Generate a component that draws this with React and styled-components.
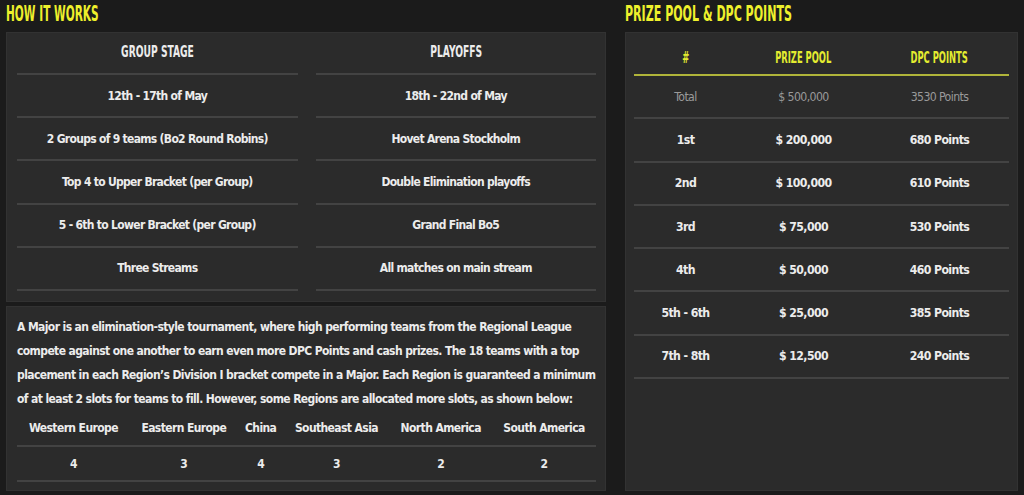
import React from "react";
import styled, { createGlobalStyle } from "styled-components";

const Global = createGlobalStyle`
  html, body { margin: 0; padding: 0; background: #1b1b1b; }
  body { font-family: "DejaVu Sans Condensed", "Liberation Sans", sans-serif; color: #ececec; }
`;

const Page = styled.div`
  width: 1024px;
  height: 495px;
  box-sizing: border-box;
  padding: 0 6px 4px 6px;
  display: grid;
  grid-template-columns: 600px 393px;
  column-gap: 19px;
  background: #1b1b1b;
  overflow: hidden;
`;

const Column = styled.section`
  display: flex;
  flex-direction: column;
  min-height: 0;
`;

const Heading = styled.h2`
  flex: none;
  margin: 0;
  height: 32px;
  line-height: 28px;
  font-family: "DejaVu Sans Condensed", sans-serif;
  font-weight: 700;
  font-size: 21px;
  color: #eef02c;
  text-transform: uppercase;
  white-space: nowrap;
  transform: scaleX(${(p) => p.$sx || 0.57});
  transform-origin: left center;
`;

const Card = styled.div`
  background: #2b2b2b;
  border: 1px solid #323232;
  box-sizing: border-box;
  padding: ${(p) => p.$pad || "0 9px 0 10px"};
  flex: ${(p) => (p.$grow ? 1 : "none")};
  height: ${(p) => p.$h || "auto"};
`;

const Stack = styled.div`
  display: flex;
  flex-direction: column;
  gap: 4px;
  flex: 1;
  min-height: 0;
`;

const TwoCols = styled.div`
  display: grid;
  grid-template-columns: 1fr 1fr;
  column-gap: 18px;
`;

const List = styled.div`
  display: flex;
  flex-direction: column;
`;

const Label = styled.span`
  display: inline-block;
  font-family: "DejaVu Sans Condensed", sans-serif;
  font-weight: 700;
  font-size: 15px;
  white-space: nowrap;
  transform: scaleX(${(p) => p.$sx || 0.68});
`;

const HeadCell = styled.div`
  height: 42px;
  box-sizing: border-box;
  padding-top: 9px;
  text-align: center;
  border-bottom: 2px solid #434343;
`;

const Cell = styled.div`
  height: 43.2px;
  box-sizing: border-box;
  display: flex;
  align-items: center;
  justify-content: center;
  font-size: 12px;
  letter-spacing: -0.7px;
  font-weight: 700;
  border-bottom: 2px solid #434343;
  white-space: nowrap;
`;

const Para = styled.p`
  margin: 0;
  padding-top: 8px;
  font-size: 12px;
  letter-spacing: -0.6px;
  font-weight: 700;
  line-height: 24px;
  color: #ececec;
  white-space: nowrap;
`;

const RegionTable = styled.table`
  width: 100%;
  border-collapse: collapse;
  th, td {
    text-align: center;
    font-size: 12px;
    letter-spacing: -0.6px;
    font-weight: 700;
    border-bottom: 2px solid #434343;
    padding: 0 4px;
    white-space: nowrap;
  }
  th { height: 34px; }
  td { height: 33px; }
`;

const PrizeTable = styled.table`
  width: 100%;
  border-collapse: collapse;
  margin-top: 8px;
  th, td { text-align: center; padding: 0; }
  th {
    height: 33px;
    color: #e4ec30;
    border-bottom: 2px solid #b0b43a;
  }
  td {
    height: 41.3px;
    font-size: 12.2px;
    letter-spacing: -0.6px;
    border-bottom: 2px solid #434343;
  }
`;

const Row = styled.tr`
  td {
    color: ${(p) => (p.$muted ? "#9a9a9a" : "#ececec")};
    font-weight: ${(p) => (p.$muted ? 400 : 700)};
  }
`;

const groupStage = [
  "12th - 17th of May",
  "2 Groups of 9 teams (Bo2 Round Robins)",
  "Top 4 to Upper Bracket (per Group)",
  "5 - 6th to Lower Bracket (per Group)",
  "Three Streams",
];
const playoffs = [
  "18th - 22nd of May",
  "Hovet Arena Stockholm",
  "Double Elimination playoffs",
  "Grand Final Bo5",
  "All matches on main stream",
];
const regions = [
  ["Western Europe", 4],
  ["Eastern Europe", 3],
  ["China", 4],
  ["Southeast Asia", 3],
  ["North America", 2],
  ["South America", 2],
];
const prizes = [
  ["Total", "$ 500,000", "3530 Points", true],
  ["1st", "$ 200,000", "680 Points"],
  ["2nd", "$ 100,000", "610 Points"],
  ["3rd", "$ 75,000", "530 Points"],
  ["4th", "$ 50,000", "460 Points"],
  ["5th - 6th", "$ 25,000", "385 Points"],
  ["7th - 8th", "$ 12,500", "240 Points"],
];

export default function App() {
  return (
    <>
      <Global />
      <Page>
        <Column>
          <Heading $sx={0.56}>How it works</Heading>
          <Stack>
            <Card $h="270px">
              <TwoCols>
                <List>
                  <HeadCell>
                    <Label>GROUP STAGE</Label>
                  </HeadCell>
                  {groupStage.map((t) => (
                    <Cell key={t}>{t}</Cell>
                  ))}
                </List>
                <List>
                  <HeadCell>
                    <Label>PLAYOFFS</Label>
                  </HeadCell>
                  {playoffs.map((t) => (
                    <Cell key={t}>{t}</Cell>
                  ))}
                </List>
              </TwoCols>
            </Card>
            <Card $grow>
              <Para>
                A Major is an elimination-style tournament, where high performing teams from the Regional League
                <br />
                compete against one another to earn even more DPC Points and cash prizes. The 18 teams with a top
                <br />
                placement in each Region’s Division I bracket compete in a Major. Each Region is guaranteed a minimum
                <br />
                of at least 2 slots for teams to fill. However, some Regions are allocated more slots, as shown below:
              </Para>
              <RegionTable>
                <thead>
                  <tr>
                    {regions.map(([r]) => (
                      <th key={r}>{r}</th>
                    ))}
                  </tr>
                </thead>
                <tbody>
                  <tr>
                    {regions.map(([r, n]) => (
                      <td key={r}>{n}</td>
                    ))}
                  </tr>
                </tbody>
              </RegionTable>
            </Card>
          </Stack>
        </Column>
        <Column>
          <Heading $sx={0.585}>Prize pool &amp; DPC points</Heading>
          <Card $grow $pad="0 8px 0 8px">
            <PrizeTable>
              <colgroup>
                <col style={{ width: "103px" }} />
                <col style={{ width: "133px" }} />
                <col />
              </colgroup>
              <thead>
                <tr>
                  <th>
                    <Label $sx={0.62}>#</Label>
                  </th>
                  <th>
                    <Label $sx={0.62}>PRIZE POOL</Label>
                  </th>
                  <th>
                    <Label $sx={0.62}>DPC POINTS</Label>
                  </th>
                </tr>
              </thead>
              <tbody>
                {prizes.map(([p, m, d, muted]) => (
                  <Row key={p} $muted={muted}>
                    <td>{p}</td>
                    <td>{m}</td>
                    <td>{d}</td>
                  </Row>
                ))}
              </tbody>
            </PrizeTable>
          </Card>
        </Column>
      </Page>
    </>
  );
}
